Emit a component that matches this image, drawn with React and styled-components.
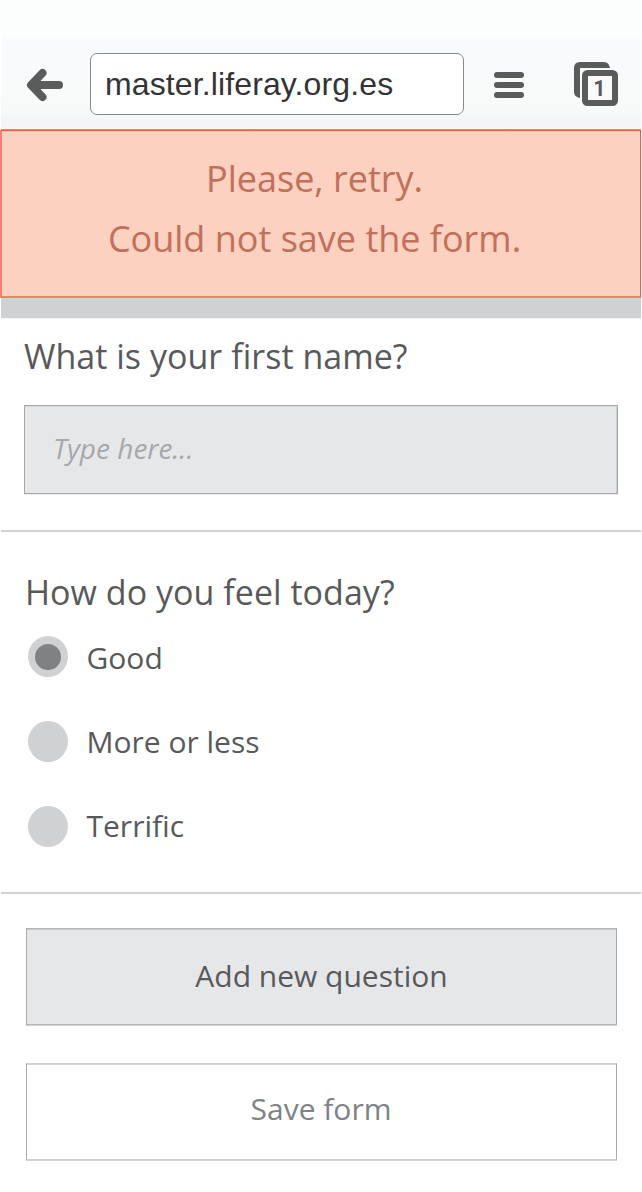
import React from "react";
import styled, { createGlobalStyle } from "styled-components";

const GlobalStyle = createGlobalStyle`
  * { box-sizing: border-box; }
  body {
    margin: 0;
    background: #fff;
    color: #58595b;
    font-family: "Open Sans", "Noto Sans", sans-serif;
  }
`;

const Screen = styled.main`
  width: 642px;
  height: 1192px;
  overflow: hidden;
  background: #fff;
`;

const BrowserBar = styled.header`
  display: flex;
  align-items: center;
  height: 130px;
  margin: 0 1px;
  padding: 39px 22px 0 25px;
  border-bottom: 1px solid #a3a3a5;
  background: linear-gradient(#fcfefd 0, #fbfefc 37px, #f9fafd 41px, #f9fafc 62px, #f8faf9 108px, #f5f6f8 118px, #f5f5f8 129px);
`;

const AddressField = styled.div`
  width: 374px;
  height: 62px;
  margin: 0 30px 0 27px;
  padding-left: 14px;
  border: 1px solid #88898b;
  border-radius: 7px;
  background: #fff;
  color: #333435;
  font: 32px/61px "Liberation Sans", Arial, sans-serif;
  letter-spacing: 0.12px;
  white-space: nowrap;
`;

const Icon = styled.svg`
  display: block;
  flex: none;
`;

const BackIcon = styled(Icon)`
  margin-top: 2px;
`;

const MenuIcon = styled(Icon)`
  margin: 2px 50px 0 0;
`;

const Alert = styled.div`
  width: 641px;
  height: 168px;
  padding: 18px 13px 0 0;
  border: 1px solid #f15a40;
  border-left: 2px solid #f67f78;
  border-bottom: 2px solid #f08262;
  background: #fcd1c0;
  color: #c0705b;
  font-size: 36px;
  line-height: 60px;
  text-align: center;
`;

const AlertLine = styled.p`
  margin: 0;
`;

const Strip = styled.div`
  height: 21px;
  margin: 0 1px;
  background: #d0d1d3;
  border-bottom: 1px solid #f4f4f5;
`;

const Question = styled.section`
  height: ${(p) => p.$height}px;
  margin: 0 1px;
  padding: ${(p) => p.$top}px 23px 0;
  border-bottom: 2px solid #d1d1d3;
`;

const Title = styled.h2`
  margin: 0 0 0 ${(p) => p.$indent || 0}px;
  font-size: 34px;
  font-weight: 400;
  line-height: 46px;
  letter-spacing: 0.03px;
  white-space: nowrap;
`;

const TextField = styled.input`
  display: block;
  width: 594px;
  height: 89px;
  margin-top: 26px;
  padding: 0 28px 4px;
  border: 1px solid #a7a9ac;
  border-radius: 0;
  outline: 0;
  background: #e6e7e9;
  box-shadow: 0 1px #ececee, inset 0 1px #d6d7d9, inset -1px 0 #cbccce;
  font: italic 28px "Open Sans", "Noto Sans", sans-serif;
  &::placeholder { color: #a7a8ab; opacity: 1; }
`;

const Options = styled.div`
  margin: 21px 0 0 4px;
`;

const Option = styled.label`
  display: flex;
  align-items: flex-start;
  height: 85px;
`;

const Radio = styled.span`
  display: grid;
  place-items: center;
  width: 40px;
  height: 41px;
  border-radius: 50%;
  background: #d0d1d3;
`;

const Dot = styled.span`
  width: 26px;
  height: 26px;
  border-radius: 50%;
  background: #808184;
`;

const OptionText = styled.span`
  margin: ${(p) => p.$top}px 0 0 18.5px;
  font-size: 30px;
  line-height: 40px;
`;

const Actions = styled.div`
  display: flex;
  flex-direction: column;
  gap: 38px;
  padding: 34px 25px 0 26px;
`;

const Button = styled.button`
  height: 97px;
  padding: ${(p) => (p.$filled ? "0 0 2px" : "0 1px 6px 0")};
  border: 1px solid ${(p) => (p.$filled ? "#b3b4b8" : "#d0d1d3")};
  border-left-color: #a9aaac;
  border-right-color: #a9aaad;
  box-shadow: 0 1px #d3d4d7, inset 0 1px ${(p) => (p.$filled ? "#c8c9cb" : "#d4d5d6")};
  background: ${(p) => (p.$filled ? "#e6e7e9" : "#fff")};
  color: ${(p) => (p.$filled ? "#58595b" : "#808285")};
  font: 30px "Open Sans", "Noto Sans", sans-serif;
`;

const options = [
  { label: "Good", checked: true, top: 2 },
  { label: "More or less", top: 1 },
  { label: "Terrific", top: 0 },
];

export default function App() {
  return (
    <>
      <GlobalStyle />
      <Screen>
        <BrowserBar>
          <BackIcon width="37" height="34" viewBox="0 0 37 34" fill="none" stroke="#5a5c5b" strokeLinecap="round" strokeLinejoin="round">
            <path d="M16.5 5 5 17l11.5 12" strokeWidth="8" />
            <path d="M6 17h27" strokeWidth="8" />
            <path d="M14 9 6 17l8 8Z" fill="#5a5c5b" strokeWidth="1" />
          </BackIcon>
          <AddressField>master.liferay.org.es</AddressField>
          <MenuIcon width="30" height="26" viewBox="0 0 30 26" stroke="#5a5c5b" strokeWidth="6" strokeLinecap="round">
            <path d="M3 3h24M3 13h24M3 23h24" />
          </MenuIcon>
          <Icon width="44" height="44" viewBox="0 0 44 44">
            <path d="M6 36Q0 35 0 30V6Q0 0 6 0H30Q35 0 36 6H6Z" fill="#5a5c5b" />
            <rect x="11" y="11" width="30" height="30" rx="2.5" fill="#fafafb" stroke="#5a5c5b" strokeWidth="6" />
            <rect x="14" y="14" width="24" height="24" fill="#fafafb" />
            <text x="25.5" y="34" textAnchor="middle" fontFamily="Roboto, sans-serif" fontWeight="700" fontSize="21.5" fill="#5a5c5b">1</text>
          </Icon>
        </BrowserBar>
        <Alert role="alert">
          <AlertLine>Please, retry.</AlertLine>
          <AlertLine>Could not save the form.</AlertLine>
        </Alert>
        <Strip />
        <Question $height={213} $top={14}>
          <Title>What is your first name?</Title>
          <TextField placeholder="Type here..." />
        </Question>
        <Question $height={362} $top={37}>
          <Title $indent={1}>How do you feel today?</Title>
          <Options>
            {options.map((o) => (
              <Option key={o.label}>
                <Radio>{o.checked && <Dot />}</Radio>
                <OptionText $top={o.top}>{o.label}</OptionText>
              </Option>
            ))}
          </Options>
        </Question>
        <Actions>
          <Button $filled>Add new question</Button>
          <Button>Save form</Button>
        </Actions>
      </Screen>
    </>
  );
}
